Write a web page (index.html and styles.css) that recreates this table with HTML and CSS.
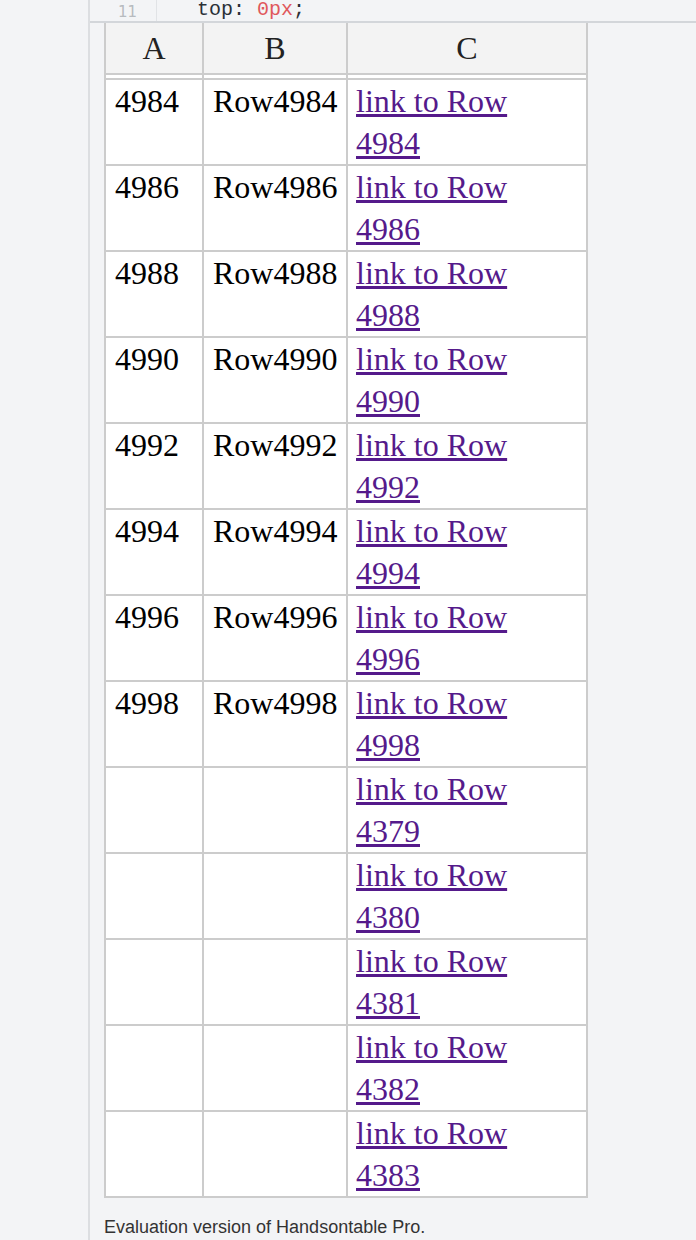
FILE: index.html
```html
<!DOCTYPE html>
<html lang="en">
<head>
  <meta charset="UTF-8">
  <title>Handsontable demo</title>
  <link rel="stylesheet" href="styles.css">
</head>
<body>
  <div class="panel">
    <!-- code line scrolled to the top -->
    <div class="code-line">
      <div class="gutter">11</div>
      <div class="code"><span class="prop">top:</span> <span class="num">0px</span>;</div>
    </div>

    <div class="hot">
      <div class="cell head">A</div>
      <div class="cell head">B</div>
      <div class="cell head">C</div>

      <div class="cell gap"></div>
      <div class="cell gap"></div>
      <div class="cell gap"></div>

      <div class="cell">4984</div><div class="cell">Row4984</div><div class="cell"><a href="#">link to Row 4984</a></div>
      <div class="cell">4986</div><div class="cell">Row4986</div><div class="cell"><a href="#">link to Row 4986</a></div>
      <div class="cell">4988</div><div class="cell">Row4988</div><div class="cell"><a href="#">link to Row 4988</a></div>
      <div class="cell">4990</div><div class="cell">Row4990</div><div class="cell"><a href="#">link to Row 4990</a></div>
      <div class="cell">4992</div><div class="cell">Row4992</div><div class="cell"><a href="#">link to Row 4992</a></div>
      <div class="cell">4994</div><div class="cell">Row4994</div><div class="cell"><a href="#">link to Row 4994</a></div>
      <div class="cell">4996</div><div class="cell">Row4996</div><div class="cell"><a href="#">link to Row 4996</a></div>
      <div class="cell">4998</div><div class="cell">Row4998</div><div class="cell"><a href="#">link to Row 4998</a></div>
      <div class="cell"></div><div class="cell"></div><div class="cell"><a href="#">link to Row 4379</a></div>
      <div class="cell"></div><div class="cell"></div><div class="cell"><a href="#">link to Row 4380</a></div>
      <div class="cell"></div><div class="cell"></div><div class="cell"><a href="#">link to Row 4381</a></div>
      <div class="cell"></div><div class="cell"></div><div class="cell"><a href="#">link to Row 4382</a></div>
      <div class="cell"></div><div class="cell"></div><div class="cell"><a href="#">link to Row 4383</a></div>
    </div>

    <div class="license">Evaluation version of Handsontable Pro.</div>
  </div>
</body>
</html>
```

FILE: styles.css
```css
/* Page */
body {
  margin: 0;
  background: #f3f4f6;
  font-family: 'Liberation Serif', serif;
}

/* Panel with the left rule */
.panel {
  margin-left: 88px;
  border-left: 2px solid #dcdee1;
  min-height: 1240px;
}

/* Code line at the top */
.code-line {
  display: flex;
  height: 21px;
  border-bottom: 2px solid #d3d6da;
  overflow: hidden;
}

.gutter {
  width: 47px;
  padding-right: 19px;
  border-right: 1px solid #e1e3e6;
  text-align: right;
  font-family: 'DejaVu Sans', sans-serif;
  font-size: 15px;
  line-height: 24px;
  color: #b7bbbf;
}

.code {
  padding-left: 40px;
  font-family: 'Liberation Mono', monospace;
  font-size: 20px;
  line-height: 20px;
  color: #2b3036;
}

.code .num {
  color: #e0585c;
}

/* Table grid */
.hot {
  display: grid;
  grid-template-columns: 98px 144px 240px;
  width: 482px;
  margin-left: 14px;
  border-left: 2px solid #ccc;
}

.cell {
  box-sizing: border-box;
  height: 86px;
  padding: 0 8px 0 9px;
  border-right: 2px solid #ccc;
  border-bottom: 2px solid #ccc;
  background: #fff;
  font-size: 32px;
  line-height: 42px;
  color: #000;
}

.cell:nth-child(3n) {
  padding-left: 8px;
}

.cell.head {
  height: 52px;
  padding: 0;
  background: #f3f3f3;
  text-align: center;
  line-height: 50px;
  color: #222;
}

.cell.gap {
  height: 5px;
  padding: 0;
}

.cell a {
  color: #551a8b;
}

/* Footer note */
.license {
  margin: 19px 0 0 14px;
  font-family: 'Liberation Sans', sans-serif;
  font-size: 18px;
  color: #333;
}
```
